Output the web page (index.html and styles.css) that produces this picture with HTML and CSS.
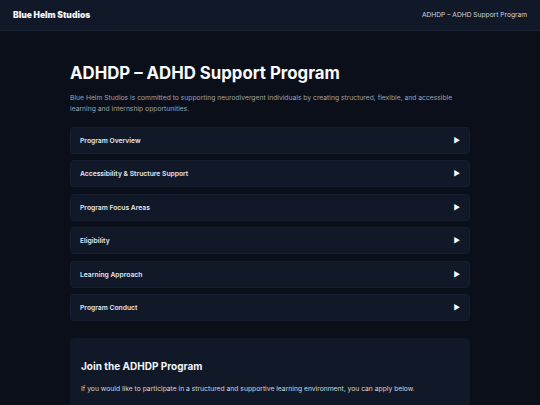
FILE: index.html
```html
<!DOCTYPE html>
<html lang="en">
<head>
<meta charset="utf-8">
<title>ADHDP – ADHD Support Program</title>
<link rel="stylesheet" href="styles.css">
</head>
<body>
<header class="topbar">
  <div class="brand">Blue Helm Studios</div>
  <div class="crumb">ADHDP – ADHD Support Program</div>
</header>
<main class="wrap">
  <h1 class="title">ADHDP – ADHD Support Program</h1>
  <p class="intro">Blue Helm Studios is committed to supporting neurodivergent individuals by creating structured, flexible, and accessible learning and internship opportunities.</p>
  <div class="list">
    <div class="item"><span>Program Overview</span><span class="arrow">▶</span></div>
    <div class="item"><span>Accessibility &amp; Structure Support</span><span class="arrow">▶</span></div>
    <div class="item"><span>Program Focus Areas</span><span class="arrow">▶</span></div>
    <div class="item"><span>Eligibility</span><span class="arrow">▶</span></div>
    <div class="item"><span>Learning Approach</span><span class="arrow">▶</span></div>
    <div class="item"><span>Program Conduct</span><span class="arrow">▶</span></div>
  </div>
  <section class="join">
    <h2 class="join-title">Join the ADHDP Program</h2>
    <p class="join-text">If you would like to participate in a structured and supportive learning environment, you can apply below.</p>
  </section>
</main>
</body>
</html>
```
FILE: styles.css
```css
* { box-sizing: border-box; }
html, body { margin: 0; padding: 0; }
body {
  background: #0b0f19;
  color: #e5e7eb;
  font-family: Inter, "Noto Sans", sans-serif;
  height: 405px;
  overflow: hidden;
}
.topbar {
  height: 31px;
  background: #111827;
  border-bottom: 1px solid #1a2233;
  display: flex;
  align-items: center;
  justify-content: space-between;
  padding: 0 13px;
}
.brand {
  font-weight: 900;
  font-size: 8.5px;
  color: #f3f4f6;
}
.crumb {
  font-size: 6.65px;
  color: #d1d5db;
}
.wrap {
  width: 400px;
  margin: 0 auto;
  padding-top: 32px;
}
.title {
  margin: 0;
  font-size: 16.8px;
  font-weight: 700;
  color: #f9fafb;
  line-height: 21px;
}
.intro {
  margin: 8px 0 0;
  font-size: 6.75px;
  line-height: 11px;
  color: #9ca3af;
}
.list {
  margin-top: 13px;
  display: flex;
  flex-direction: column;
  gap: 6.4px;
}
.item {
  height: 27px;
  background: #111827;
  border: 1px solid #161e30;
  border-radius: 4px;
  display: flex;
  align-items: center;
  justify-content: space-between;
  padding: 0 9px;
  font-size: 6.75px;
  font-weight: 600;
  color: #e5e7eb;
}
.arrow {
  font-size: 7px;
  color: #f9fafb;
}
.join {
  margin-top: 17px;
  background: #111827;
  border-radius: 5px;
  padding: 22px 11px 20px;
}
.join-title {
  margin: 0;
  font-size: 10px;
  font-weight: 700;
  color: #f3f4f6;
  line-height: 13px;
}
.join-text {
  margin: 11px 0 0;
  font-size: 6.75px;
  color: #d1d5db;
}
```
